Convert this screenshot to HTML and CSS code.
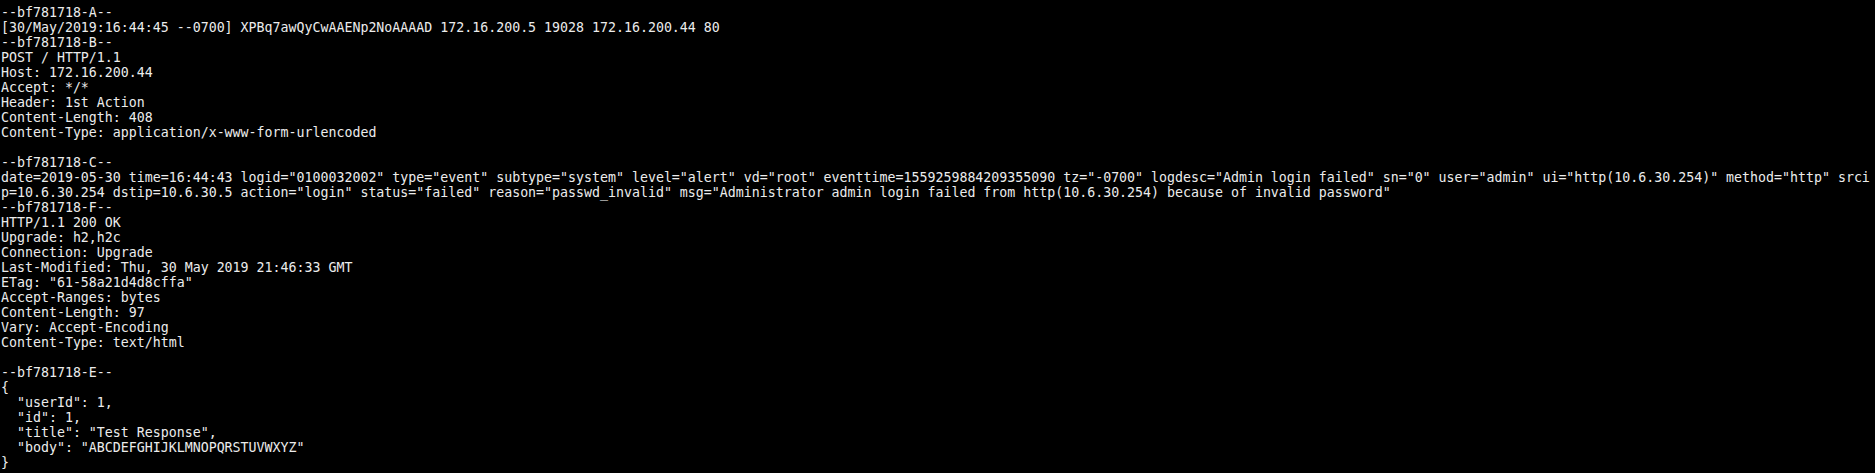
FILE: index.html
```html
<!DOCTYPE html>
<html>
<head>
<meta charset="utf-8">
<link rel="stylesheet" href="styles.css">
</head>
<body>
<pre class="term">--bf781718-A--
[30/May/2019:16:44:45 --0700] XPBq7awQyCwAAENp2NoAAAAD 172.16.200.5 19028 172.16.200.44 80
--bf781718-B--
POST / HTTP/1.1
Host: 172.16.200.44
Accept: */*
Header: 1st Action
Content-Length: 408
Content-Type: application/x-www-form-urlencoded

--bf781718-C--
date=2019-05-30 time=16:44:43 logid="0100032002" type="event" subtype="system" level="alert" vd="root" eventtime=1559259884209355090 tz="-0700" logdesc="Admin login failed" sn="0" user="admin" ui="http(10.6.30.254)" method="http" srci
p=10.6.30.254 dstip=10.6.30.5 action="login" status="failed" reason="passwd_invalid" msg="Administrator admin login failed from http(10.6.30.254) because of invalid password"
--bf781718-F--
HTTP/1.1 200 OK
Upgrade: h2,h2c
Connection: Upgrade
Last-Modified: Thu, 30 May 2019 21:46:33 GMT
ETag: "61-58a21d4d8cffa"
Accept-Ranges: bytes
Content-Length: 97
Vary: Accept-Encoding
Content-Type: text/html

--bf781718-E--
{
  "userId": 1,
  "id": 1,
  "title": "Test Response",
  "body": "ABCDEFGHIJKLMNOPQRSTUVWXYZ"
}</pre>
</body>
</html>
```

FILE: styles.css
```css
html, body {
  margin: 0;
  padding: 0;
  background: #000;
  height: 100%;
  overflow: hidden;
}
.term {
  margin: 0;
  padding: 5px 0 0 1px;
  font-family: "DejaVu Sans Mono", "Liberation Mono", monospace;
  font-size: 13.28px;
  line-height: 15px;
  color: #ececec;
  white-space: pre;
}
```
